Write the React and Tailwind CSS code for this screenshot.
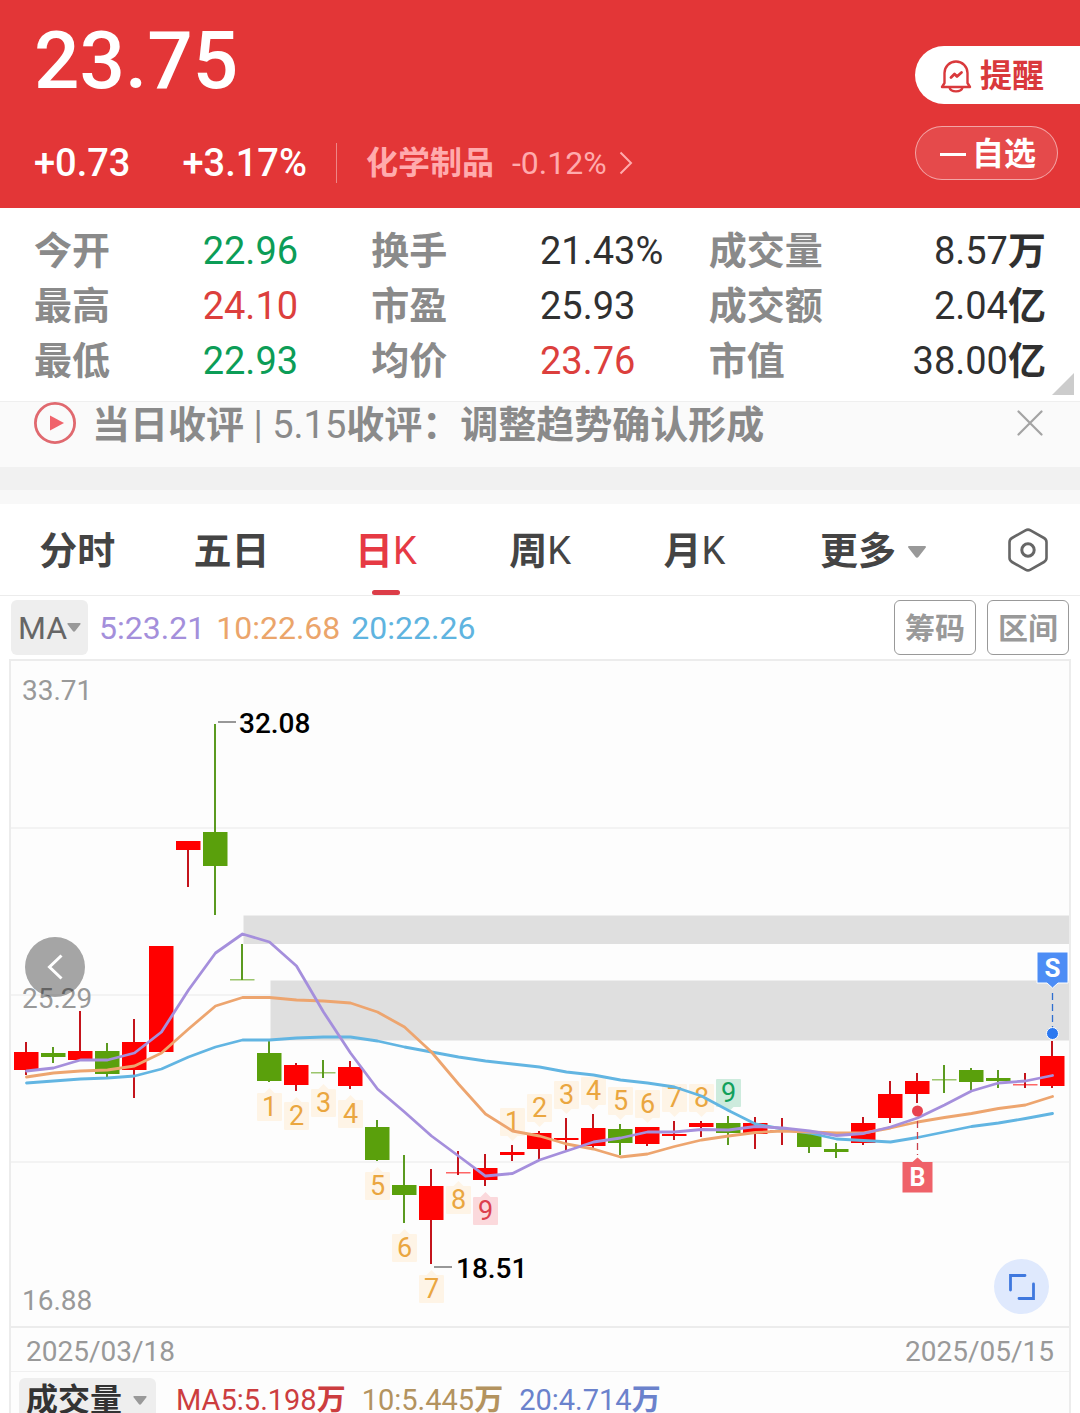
import React from 'react';
import clsx from 'clsx';

const UP = '#ff0000';
const DOWN = '#5aa00c';

const STATS = [
  { label: '今开', value: '22.96', tone: 'down' },
  { label: '换手', value: '21.43%' },
  { label: '成交量', value: '8.57', unit: '万' },
  { label: '最高', value: '24.10', tone: 'up' },
  { label: '市盈', value: '25.93' },
  { label: '成交额', value: '2.04', unit: '亿' },
  { label: '最低', value: '22.93', tone: 'down' },
  { label: '均价', value: '23.76', tone: 'up' },
  { label: '市值', value: '38.00', unit: '亿' },
];

const TABS = [
  { id: 'minute', label: '分时' },
  { id: 'five', label: '五日' },
  { id: 'day', label: '日', suffix: 'K' },
  { id: 'week', label: '周', suffix: 'K' },
  { id: 'month', label: '月', suffix: 'K' },
];

// Plot area is 1058 x 665 units, one candle every 27 units
const PLOT_W = 1058;
const PLOT_H = 665;
const candleX = (i) => 15.5 + i * 27;

// [direction, high, body top, body bottom, low]
const CANDLES = [
  ['u', 381, 391, 409, 414],
  ['d', 386, 392, 396, 402],
  ['u', 350, 390, 399, 399],
  ['d', 382, 390, 413, 416],
  ['u', 358, 381, 409, 437],
  ['u', 285, 285, 391, 393],
  ['u', 180, 180, 189, 226],
  ['d', 63, 171, 205, 254],
  ['d', 283, 318, 319, 319],
  ['d', 380, 392, 420, 421],
  ['u', 402, 404, 424, 430],
  ['d', 399, 411, 412, 417],
  ['u', 400, 406, 425, 428],
  ['d', 459, 466, 499, 500],
  ['d', 494, 524, 534, 562],
  ['u', 508, 525, 559, 603],
  ['u', 490, 511, 512, 514],
  ['u', 493, 507, 519, 525],
  ['u', 484, 491, 494, 500],
  ['u', 470, 472, 488, 498],
  ['u', 457, 477, 479, 491],
  ['u', 453, 467, 485, 488],
  ['d', 463, 468, 482, 494],
  ['u', 466, 466, 483, 485],
  ['u', 460, 473, 475, 479],
  ['u', 460, 462, 466, 476],
  ['d', 455, 462, 472, 484],
  ['u', 456, 462, 473, 488],
  ['u', 457, 469, 470, 484],
  ['d', 472, 472, 486, 492],
  ['d', 482, 488, 491, 497],
  ['u', 456, 462, 482, 484],
  ['u', 420, 433, 457, 462],
  ['u', 412, 420, 433, 442],
  ['d', 404, 418, 419, 432],
  ['d', 407, 409, 421, 429],
  ['d', 409, 417, 420, 427],
  ['u', 412, 423, 424, 427],
  ['u', 380, 395, 425, 427],
];

const MA5 = [
  410, 407, 399, 399, 392, 371, 329, 292, 273, 281, 305, 351, 392, 428, 451,
  475, 495, 515, 512.5, 499, 490, 481, 477, 471, 471, 468.5, 469, 465.5, 467,
  470, 474.5, 472.5, 466, 457, 444, 430, 422, 420, 414.5,
];
const MA10 = [
  416, 412, 410, 409, 405, 392, 368, 345, 336.5, 336.5, 339, 340, 342, 351,
  366, 391, 423, 453, 470, 475, 483, 488, 496, 493, 485.5, 479, 475, 471.5,
  470, 471, 472, 472, 467, 461, 456.5, 452.5, 447.5, 444, 435.5,
];
const MA20 = [
  422, 420, 418, 417, 415, 408, 396, 386, 379, 379, 377, 376, 376, 380, 386,
  391, 396, 400, 403, 406, 411, 414, 419, 422, 426, 435, 449.5, 463, 468, 472,
  478, 479.5, 481, 476.5, 471, 465.5, 462, 457.5, 452.5,
];

// Nine-count markers: one run under the lows, one run over the highs
const COUNTS = [
  { start: 9, side: 'below' },
  { start: 18, side: 'above' },
].flatMap(({ start, side }) =>
  Array.from({ length: 9 }, (_, k) => ({ index: start + k, n: k + 1, side }))
);

const Caret = ({ className }) => (
  <svg viewBox="0 0 18 12" className={className} fill="currentColor" aria-hidden="true">
    <path d="M1.2 0h15.6c1 0 1.5 1 .8 1.8l-7 9c-.9 1.2-2.3 1.2-3.2 0l-7-9C-.3 1 .2 0 1.2 0z" />
  </svg>
);

const BellIcon = () => (
  <svg
    viewBox="0 0 32 34"
    className="h-[34px] w-8"
    fill="none"
    stroke="#d9393c"
    strokeWidth="2.4"
    strokeLinecap="round"
    strokeLinejoin="round"
    aria-hidden="true"
  >
    <path d="M4.5 24V14a11.500 11.500 0 0 1 23 0v10l2.500 4H2z" />
    <path d="M9.500 28.500c1.200 5.200 11.800 5.200 13 0" />
    <path d="M11 18.500l3.500-3.500 2.500 2.500 4.500-4" strokeWidth="2.8" />
  </svg>
);

const Header = () => (
  <header className="flex justify-between bg-[#e33637] pt-[21px] pb-[23px] pl-[34px] text-white">
    <div>
      <div className="text-[80px] leading-[80px] font-medium">23.75</div>
      <div className="mt-10 flex items-center text-[38px] leading-[44px] font-medium">
        <span>+0.73</span>
        <span className="ml-[52px]">+3.17%</span>
        <span className="mx-[29px] h-10 w-px bg-white/40" />
        <a href="#sector" className="flex items-center text-[32px] font-normal text-[#ffabad]">
          <span className="font-bold">化学制品</span>
          <span className="ml-[18px]">-0.12%</span>
          <svg viewBox="0 0 14 24" className="ml-3 h-6 w-[14px]" fill="none" stroke="currentColor" strokeWidth="2" aria-hidden="true">
            <path d="M1.5 1.5 12 12 1.5 22.5" />
          </svg>
        </a>
      </div>
    </div>
    <div className="flex flex-col items-start gap-[22px] pt-[25px] text-[32px] font-bold">
      <button className="flex h-[58px] w-[165px] items-center gap-2 rounded-l-full bg-white pt-[2px] pl-[25px] text-[#d9393c]">
        <BellIcon />
        提醒
      </button>
      <button className="flex h-[54px] w-[143px] items-center gap-[6px] rounded-full border border-white/50 bg-white/10 pt-[2px] pl-6">
        <span className="h-[3px] w-[26px] bg-white" />
        自选
      </button>
    </div>
  </header>
);

const Stats = () => (
  <section className="relative border-b border-[#efefef] bg-white px-[34px] pt-4 pb-3">
    <dl className="grid grid-cols-6 text-[38px] leading-[55px]">
      {STATS.map((s) => (
        <React.Fragment key={s.label}>
          <dt className="font-bold whitespace-nowrap text-[#8a8a8a]">{s.label}</dt>
          <dd
            className={clsx(
              'whitespace-nowrap',
              s.unit && 'text-right',
              s.tone === 'up' && 'text-[#dc3f3d]',
              s.tone === 'down' && 'text-[#0c9d57]',
              !s.tone && 'text-[#303030]'
            )}
          >
            {s.value}
            {s.unit && <span className="font-bold">{s.unit}</span>}
          </dd>
        </React.Fragment>
      ))}
    </dl>
    <svg viewBox="0 0 22 22" className="absolute right-[6px] bottom-[6px] size-[22px]" aria-hidden="true">
      <path d="M22 0v22H0z" fill="#cccccc" />
    </svg>
  </section>
);

const Notice = () => (
  <section className="border-b-[23px] border-[#f1f1f1] bg-[#fafafa] pr-[37px] pb-[23px] pl-[34px]">
    <div className="flex h-[42px] items-center">
      <svg viewBox="0 0 42 42" className="size-[42px]" aria-hidden="true">
        <circle cx="21" cy="21" r="19.6" fill="none" stroke="#e0696f" strokeWidth="2.8" />
        <path d="M16 13.5v15l14-7.5z" fill="#f0636b" />
      </svg>
      <a href="#review" className="ml-4 pt-[3px] text-[38px] leading-[42px] whitespace-nowrap text-[#8a8a8a]">
        <span className="font-bold">当日收评</span> | 5.15
        <span className="font-bold">收评：调整趋势确认形成</span>
      </a>
      <button className="ml-auto" aria-label="关闭">
        <svg viewBox="0 0 26 26" className="size-[26px]" stroke="#a3a3a3" strokeWidth="2.2" strokeLinecap="round" aria-hidden="true">
          <path d="M1.5 1.5l23 23M24.5 1.5l-23 23" />
        </svg>
      </button>
    </div>
  </section>
);

const PeriodTabs = () => (
  <nav className="flex items-stretch border-t-[14px] border-b border-t-[#f8f8f8] border-b-[#ececec] bg-white text-[38px] text-[#444444]">
    <div className="grid h-[91px] flex-1 grid-cols-6">
      {TABS.map((t) => {
        const active = t.id === 'day';
        return (
          <button key={t.id} className={clsx('relative pt-1', active && 'text-[#e63a44]')}>
            <span className="font-bold">{t.label}</span>
            {t.suffix}
            {active && (
              <span className="absolute bottom-0 left-1/2 h-[5px] w-7 -translate-x-1/2 rounded-full bg-[#dc3d48]" />
            )}
          </button>
        );
      })}
      <button className="flex items-center justify-end gap-3 pt-1 font-bold whitespace-nowrap">
        更多
        <Caret className="h-3 w-[18px] text-[#999999]" />
      </button>
    </div>
    <button className="flex w-[154px] items-center justify-end pr-8" aria-label="设置">
      <svg viewBox="0 0 40 44" className="h-11 w-10" fill="none" stroke="#666666" strokeWidth="2.6" strokeLinejoin="round" aria-hidden="true">
        <path d="M17.5 2.3q2.500-1.400 5 0l13.500 7.700q2.500 1.400 2.500 4.200v15.600q0 2.800-2.500 4.200l-13.500 7.700q-2.500 1.400-5 0L4 34q-2.500-1.400-2.500-4.200V14.200Q1.500 11.400 4 10z" />
        <circle cx="20" cy="22" r="6.2" strokeWidth="3" />
      </svg>
    </button>
  </nav>
);

const IndicatorBar = () => (
  <div className="flex items-center gap-[11px] bg-white px-[11px] py-1 text-[32px]">
    <button className="flex h-[55px] items-center rounded-md bg-[#eeeeee] px-[7px] text-[#666666]">
      MA
      <Caret className="h-[9px] w-[14px] text-[#999999]" />
    </button>
    <span className="text-[#a48fdb]">5:23.21</span>
    <span className="text-[#eba56b]">10:22.68</span>
    <span className="text-[#5fb4e0]">20:22.26</span>
    <button className="ml-auto h-[55px] w-[82px] rounded-md border border-[#999999] pt-[2px] text-[30px] font-bold text-[#999999]">
      筹码
    </button>
    <button className="h-[55px] w-[82px] rounded-md border border-[#999999] pt-[2px] text-[30px] font-bold text-[#999999]">
      区间
    </button>
  </div>
);

const MaLine = ({ values, color }) => (
  <polyline
    points={values.map((y, i) => `${candleX(i)},${y}`).join(' ')}
    fill="none"
    stroke={color}
    strokeWidth="2.8"
    strokeLinejoin="round"
    strokeLinecap="round"
  />
);

const Candle = ({ x, data }) => {
  const [dir, high, top, bottom, low] = data;
  const color = dir === 'u' ? UP : DOWN;
  const thin = bottom - top <= 1;
  return (
    <g>
      <rect x={x - 1.5} y={high} width="2" height={low - high} fill={dir === 'u' ? '#c4141c' : '#5b9a20'} />
      <rect x={x - 12.5} y={top} width="24.5" height={thin ? 1.5 : bottom - top} fill={color} opacity={thin ? 0.6 : 1} />
    </g>
  );
};

const CountMark = ({ index, n, side }) => {
  const [, high, , , low] = CANDLES[index];
  const x = candleX(index);
  const cy = side === 'below' ? low + 25 : high - 23;
  const edge = side === 'below' ? cy - 14 : cy + 14;
  const tip = side === 'below' ? edge - 5 : edge + 5;
  let fill = '#fef4e6';
  let text = '#eaa640';
  if (n === 9) {
    fill = side === 'below' ? '#fbd9dc' : '#cdebdd';
    text = side === 'below' ? '#dc3f4c' : '#12a05c';
  }
  return (
    <g>
      <rect x={x - 12.5} y={cy - 14} width="25" height="28" rx="1" fill={fill} />
      <path d={`M${x - 5} ${edge}L${x} ${tip}L${x + 5} ${edge}z`} fill={fill} />
      <text x={x} y={cy + 9} textAnchor="middle" fontSize="27" fill={text}>
        {n}
      </text>
    </g>
  );
};

const KChart = () => (
  <div className="relative border-y-2 border-[#ececec]">
    <svg viewBox={`0 0 ${PLOT_W} ${PLOT_H}`} className="block w-full">
      {[167, 334, 501].map((y) => (
        <rect key={y} x="0" y={y - 1} width={PLOT_W} height="2" fill="#f3f3f3" />
      ))}

      {/* unfilled price gaps */}
      <rect x="232.5" y="254.5" width="826" height="28.5" fill="#dfdfdf" />
      <rect x="259.5" y="319.5" width="799" height="60" fill="#dfdfdf" />

      {CANDLES.map((c, i) => (
        <Candle key={i} x={candleX(i)} data={c} />
      ))}
      {COUNTS.map((c) => (
        <CountMark key={c.index} {...c} />
      ))}

      <MaLine values={MA20} color="#62b5e2" />
      <MaLine values={MA10} color="#eda56f" />
      <MaLine values={MA5} color="#a58fdc" />

      <g fontSize="28" fill="#999999">
        <text x="11" y="39">33.71</text>
        <text x="11" y="347">25.29</text>
        <text x="11" y="649">16.88</text>
      </g>
      <g fontSize="28" fontWeight="500" fill="#000000">
        <text x="228" y="72">32.08</text>
        <text x="445" y="617">18.51</text>
      </g>
      <path d="M207 61h18M423 606h18" stroke="#777777" strokeWidth="1.5" />

      {/* buy point */}
      <path d="M906.5 460v34" stroke="#c9404a" strokeWidth="1.3" strokeDasharray="7 4" />
      <circle cx="906.5" cy="450" r="5.5" fill="#e8414d" />
      <path d="M891.5 501h10l5-4.500 5 4.500h10v30.500h-30z" fill="#ef6269" />
      <text x="906.5" y="525" textAnchor="middle" fontSize="25" fontWeight="700" fill="#ffffff">B</text>

      {/* sell point */}
      <path d="M1041.5 332v35" stroke="#2f6fd0" strokeWidth="1.3" strokeDasharray="7 4" />
      <circle cx="1041.5" cy="372.5" r="6" fill="#2b78f0" stroke="#ffffff" strokeWidth="1" />
      <path d="M1026 291h31v31h-10l-5.500 5-5.500-5h-10z" fill="#4d8df5" stroke="#ffffff" strokeWidth="1" />
      <text x="1041.5" y="316" textAnchor="middle" fontSize="26" fontWeight="700" fill="#ffffff">S</text>
    </svg>

    <button
      className="absolute top-[46%] left-[14px] flex size-[60px] -translate-y-1/2 items-center justify-center rounded-full bg-black/35"
      aria-label="向前"
    >
      <svg viewBox="0 0 16 26" className="h-[26px] w-4" fill="none" stroke="#ffffff" strokeWidth="3" aria-hidden="true">
        <path d="M14.5 1.5 2.5 13l12 11.5" />
      </svg>
    </button>
    <button
      className="absolute right-5 bottom-3 flex size-[55px] items-center justify-center rounded-full bg-[#dfe9fd]"
      aria-label="全屏"
    >
      <svg viewBox="0 0 26 26" className="size-[26px]" fill="none" stroke="#3f78de" strokeWidth="2.8" strokeLinecap="round" aria-hidden="true">
        <path d="M1.5 16V1.5H16M24.5 10v14.5H10" />
      </svg>
    </button>
  </div>
);

const App = () => (
  <main className="h-screen overflow-hidden bg-white font-['Roboto','Noto_Sans_CJK_SC',sans-serif]">
    <Header />
    <Stats />
    <Notice />
    <PeriodTabs />
    <IndicatorBar />
    <section className="mx-[9px] border-x-2 border-[#ececec] bg-[#fdfdfd]">
      <KChart />
      <div className="flex h-11 items-center justify-between border-b border-[#f0f0f0] px-[15px] pt-1 text-[28px] text-[#999999]">
        <time>2025/03/18</time>
        <time>2025/05/15</time>
      </div>
      <div className="flex items-center gap-4 px-2 pt-[6px] text-[29px] leading-[44px]">
        <button className="mr-1 flex items-center gap-[11px] rounded-md bg-[#eeeeee] pr-[9px] pl-[7px] text-[32px] font-bold text-[#333333]">
          成交量
          <Caret className="h-[9px] w-[14px] text-[#999999]" />
        </button>
        <span className="text-[#cc3d3f]">
          MA5:5.198<span className="font-bold">万</span>
        </span>
        <span className="text-[#b3935f]">
          10:5.445<span className="font-bold">万</span>
        </span>
        <span className="text-[#6b82cc]">
          20:4.714<span className="font-bold">万</span>
        </span>
      </div>
    </section>
  </main>
);

export default App;
